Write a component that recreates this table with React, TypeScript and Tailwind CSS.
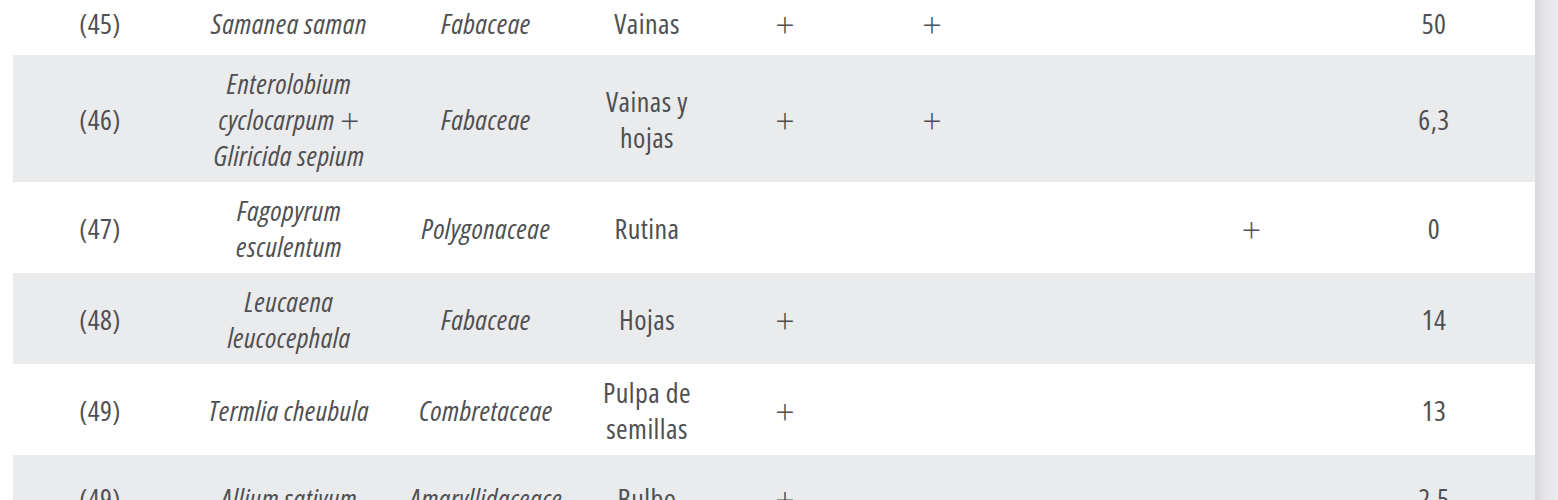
import React from "react";

type Row = {
  n: string;
  species: string[];
  family: string;
  part: string[];
  c5?: boolean;
  c6?: boolean;
  c7?: boolean;
  c8?: boolean;
  value: string;
  gray: boolean;
  minH: string;
};

const rows: Row[] = [
  { n: "(45)", species: ["Samanea saman"], family: "Fabaceae", part: ["Vainas"], c5: true, c6: true, value: "50", gray: false, minH: "min-h-[64px]" },
  { n: "(46)", species: ["Enterolobium", "cyclocarpum +", "Gliricida sepium"], family: "Fabaceae", part: ["Vainas y", "hojas"], c5: true, c6: true, value: "6,3", gray: true, minH: "min-h-[64px]" },
  { n: "(47)", species: ["Fagopyrum", "esculentum"], family: "Polygonaceae", part: ["Rutina"], c8: true, value: "0", gray: false, minH: "min-h-[64px]" },
  { n: "(48)", species: ["Leucaena", "leucocephala"], family: "Fabaceae", part: ["Hojas"], c5: true, value: "14", gray: true, minH: "min-h-[64px]" },
  { n: "(49)", species: ["Termlia cheubula"], family: "Combretaceae", part: ["Pulpa de", "semillas"], c5: true, value: "13", gray: false, minH: "min-h-[64px]" },
  { n: "(49)", species: ["Allium sativum"], family: "Amaryllidaceace", part: ["Bulbo"], c5: true, value: "2,5", gray: true, minH: "min-h-[86px]" },
];

const PlusGlyph = () => (
  <span className="inline-block h-[36px] align-top not-italic text-[34px] font-light leading-[36px] [font-stretch:100%] tracking-normal translate-y-[1.5px]">
    +
  </span>
);

const Lines = ({ lines }: { lines: string[] }) => (
  <>
    {lines.map((l, i) =>
      l.endsWith(" +") ? (
        <div key={i} className="h-[36px]">
          {l.slice(0, -1)}
          <PlusGlyph />
        </div>
      ) : (
        <div key={i}>{l}</div>
      )
    )}
  </>
);

const Plus = ({ on }: { on?: boolean }) => (
  <div className="flex items-center justify-center h-[36px]">{on ? <PlusGlyph /> : null}</div>
);

export default function App() {
  return (
    <div className="w-[1558px] h-[500px] overflow-hidden bg-white flex">
      <div className="w-[13px] shrink-0 bg-white" />
      <div className="w-[1522px] shrink-0 -mt-[9px] font-['Open_Sans',sans-serif] [font-stretch:75%] font-normal text-[28px] leading-[36px] text-[#505052] tracking-[0.45px]">
        {rows.map((r, i) => (
          <div
            key={i}
            className={`grid grid-cols-[174px_204px_190px_132px_144px_150px_163px_163px_202px] items-center text-center py-[9.5px] ${r.minH} ${r.gray ? "bg-[#eaebed]" : "bg-white"}`}
          >
            <div>{r.n}</div>
            <div className="italic">
              <Lines lines={r.species} />
            </div>
            <div className="italic">{r.family}</div>
            <div>
              <Lines lines={r.part} />
            </div>
            <Plus on={r.c5} />
            <Plus on={r.c6} />
            <Plus on={r.c7} />
            <Plus on={r.c8} />
            <div>{r.value}</div>
          </div>
        ))}
      </div>
      <div className="flex-1 bg-[linear-gradient(to_right,#d9dade_0px,#dcdde1_4px,#e6e6ea_10px,#ececef_23px)]" />
    </div>
  );
}
